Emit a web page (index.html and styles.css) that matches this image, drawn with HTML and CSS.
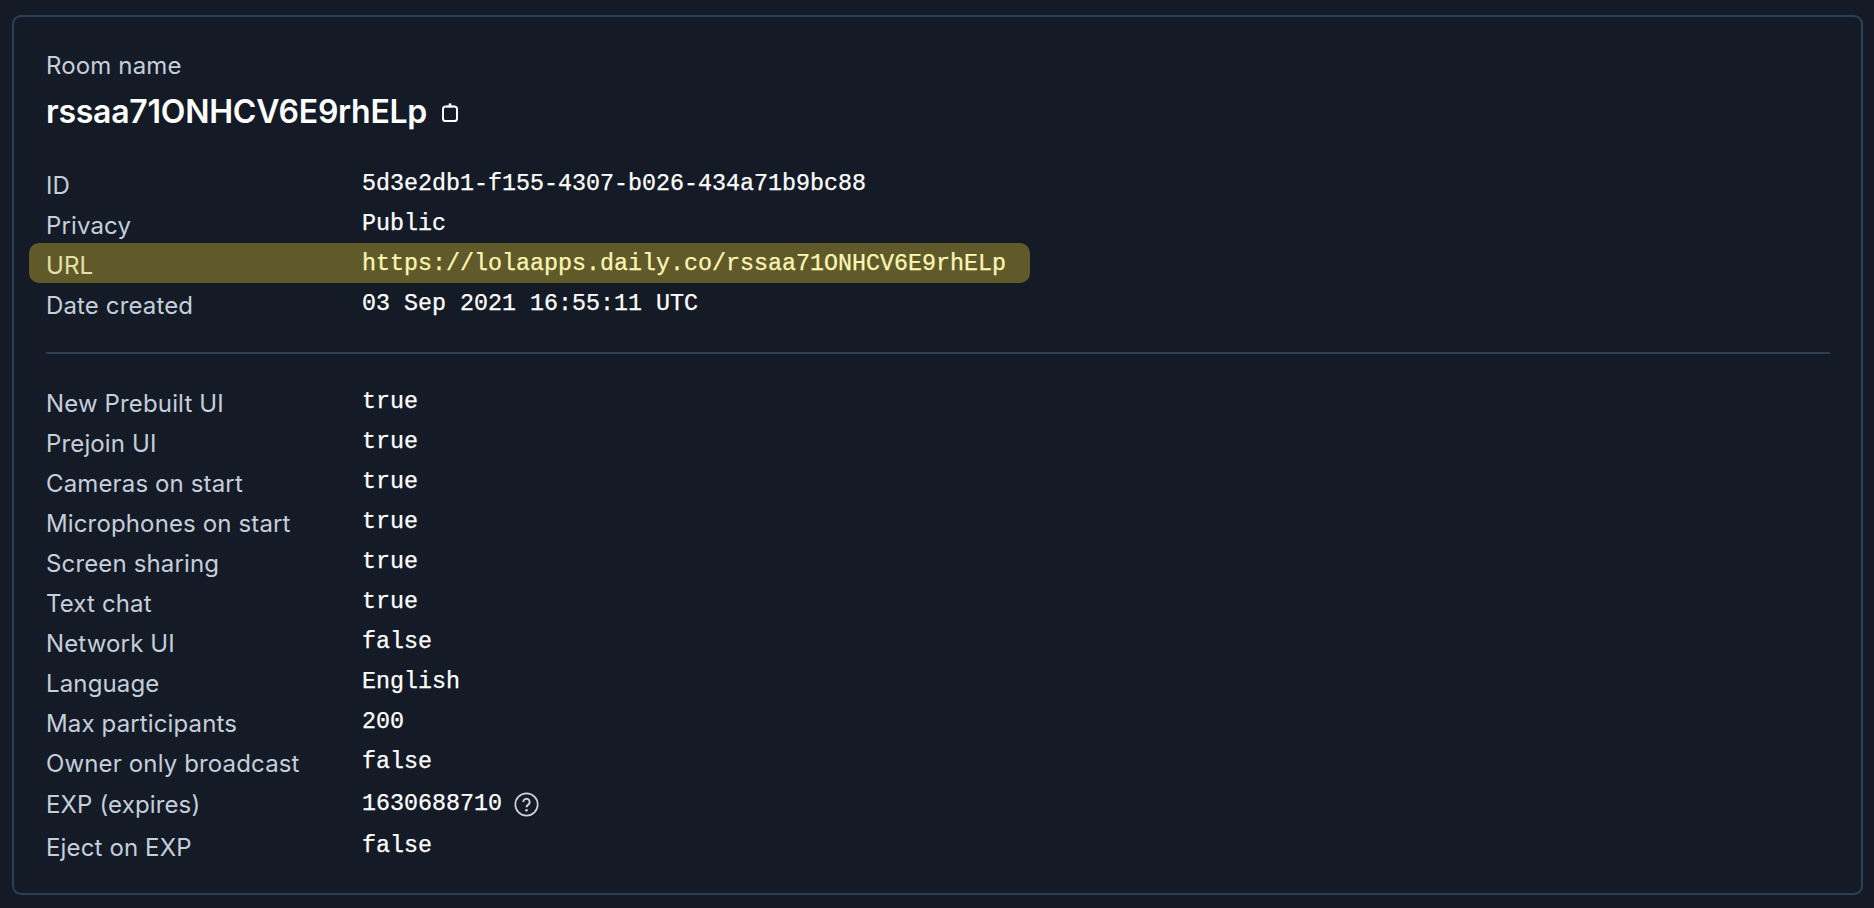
FILE: index.html
```html
<!DOCTYPE html>
<html lang="en">
<head>
<meta charset="utf-8">
<title>Room details</title>
<link rel="stylesheet" href="styles.css">
</head>
<body>
<main class="card">
  <header class="head">
    <div class="head-label">Room name</div>
    <div class="head-title">
      <h1>rssaa71ONHCV6E9rhELp</h1>
      <svg class="clip" width="16" height="19" viewBox="0 0 16 19" fill="none" stroke="currentColor" stroke-width="2" aria-hidden="true"><rect x="1" y="3.5" width="14" height="14.5" rx="2.6"/><path d="M4.5 2.6h7v1.8h-7z" fill="currentColor" stroke="none"/><path d="M6.7 0.4h2.6v3h-2.6z" fill="currentColor" stroke="none"/></svg>
    </div>
  </header>
  <section class="rows">
    <div class="row"><span class="k">ID</span><span class="v">5d3e2db1-f155-4307-b026-434a71b9bc88</span></div>
    <div class="row"><span class="k">Privacy</span><span class="v">Public</span></div>
    <div class="row hl"><span class="k">URL</span><span class="v">https://lolaapps.daily.co/rssaa71ONHCV6E9rhELp</span></div>
    <div class="row"><span class="k">Date created</span><span class="v">03 Sep 2021 16:55:11 UTC</span></div>
  </section>
  <hr class="rule">
  <section class="rows">
    <div class="row"><span class="k">New Prebuilt UI</span><span class="v">true</span></div>
    <div class="row"><span class="k">Prejoin UI</span><span class="v">true</span></div>
    <div class="row"><span class="k">Cameras on start</span><span class="v">true</span></div>
    <div class="row"><span class="k">Microphones on start</span><span class="v">true</span></div>
    <div class="row"><span class="k">Screen sharing</span><span class="v">true</span></div>
    <div class="row"><span class="k">Text chat</span><span class="v">true</span></div>
    <div class="row"><span class="k">Network UI</span><span class="v">false</span></div>
    <div class="row"><span class="k">Language</span><span class="v">English</span></div>
    <div class="row"><span class="k">Max participants</span><span class="v">200</span></div>
    <div class="row"><span class="k">Owner only broadcast</span><span class="v">false</span></div>
    <div class="row tall"><span class="k">EXP (expires)</span><span class="v">1630688710<svg class="help" width="25" height="25" viewBox="0 0 25 25" fill="none" stroke="currentColor" aria-hidden="true"><circle cx="12.5" cy="12.5" r="11.2" stroke-width="1.7"/><path d="M9.3 10a3.2 3.2 0 1 1 5 2.6c-1.2.8-1.8 1.4-1.8 2.6" stroke-width="2"/><circle cx="12.5" cy="18.3" r="1.3" fill="currentColor" stroke="none"/></svg></span></div>
    <div class="row"><span class="k">Eject on EXP</span><span class="v">false</span></div>
  </section>
</main>
</body>
</html>
```
FILE: styles.css
```css
* { box-sizing: border-box; }
html, body { height: 100%; }
body {
  margin: 0;
  padding: 15px 11px 13px 12px;
  background: #141b26;
  color: #fff;
  font-family: Inter, "Liberation Sans", sans-serif;
  overflow: hidden;
}
.card {
  height: 880px;
  border: 2px solid #2b3f56;
  border-radius: 9px;
  padding: 33px 31px 0 32px;
}
.head-label {
  font-size: 24px;
  line-height: 32px;
  letter-spacing: 0.14px;
  color: #c5cedb;
}
.head-title {
  display: flex;
  align-items: center;
  gap: 15px;
  margin-top: 7px;
  height: 46px;
}
.head-title h1 {
  margin: 0;
  font-size: 32px;
  line-height: 46px;
  font-weight: 600;
  letter-spacing: -0.25px;
}
.clip { color: #fff; flex: none; }
.rows { display: flex; flex-direction: column; }
.head + .rows { margin-top: 28px; }
.row {
  display: grid;
  grid-template-columns: 316px 1fr;
  height: 40px;
  align-items: center;
}
.row.tall { height: 44px; }
.k {
  font-size: 24px;
  line-height: 40px;
  letter-spacing: 0.14px;
  color: #c5cedb;
  padding-top: 3px;
}
.v {
  font-family: "Liberation Mono", "DejaVu Sans Mono", monospace;
  font-size: 23.34px;
  font-weight: 400;
  -webkit-text-stroke: 0.25px currentColor;
  line-height: 40px;
  color: #fff;
  display: flex;
  align-items: center;
  gap: 12px;
  white-space: pre;
  margin-top: -2px;
}
.tall .v { margin-top: 2px; }
.help { color: #c8d1dc; flex: none; -webkit-text-stroke: 0; }
.hl {
  margin-left: -17px;
  padding-left: 17px;
  width: 1001px;
  border-radius: 10px;
  background: #605a2b;
}
.hl .k { color: #e5e0a8; }
.hl .v { color: #fdf6b4; }
.rule {
  border: 0;
  height: 2px;
  background: #2b3f56;
  margin: 29px 0 27px;
}
```
